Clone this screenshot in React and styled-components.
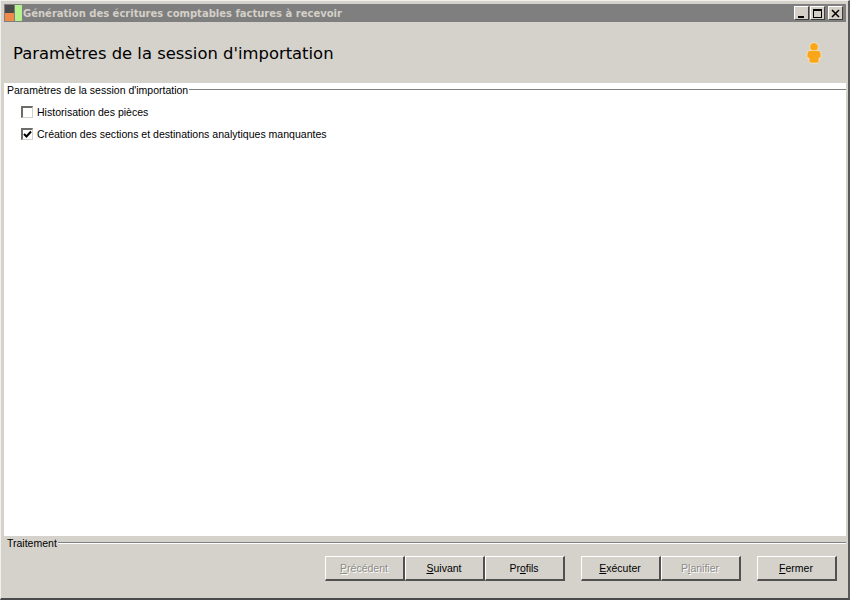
import React from 'react';
import styled, { createGlobalStyle } from 'styled-components';

const GlobalStyle = createGlobalStyle`
    html, body { margin: 0; padding: 0; background: #d5d2cc; }
    body { font-family: "Liberation Sans", Arial, sans-serif; }
`;

const Window = styled.div`
    box-sizing: border-box;
    width: 850px;
    height: 600px;
    display: flex;
    flex-direction: column;
    background: #d5d2cc;
    border-top: 1px solid #f2f0ec;
    border-left: 1px solid #f2f0ec;
    border-right: 2px solid #5a5a5a;
    border-bottom: 2px solid #4a4a4a;
    padding: 3px 2px 0 3px;
`;

const TitleBar = styled.div`
    height: 18px;
    flex: none;
    display: flex;
    align-items: center;
    background: #7f7f7f;
    color: #d4d0c8;
    font-family: "DejaVu Sans", Verdana, sans-serif;
    font-weight: bold;
    font-size: 10px;
    padding-right: 3px;
`;

const AppIcon = styled.svg`
    width: 18px;
    height: 18px;
    flex: none;
    margin-right: 1px;
`;

const TitleText = styled.span`
    flex: 1;
    white-space: nowrap;
`;

const WinButton = styled.div`
    box-sizing: border-box;
    width: 15px;
    height: 14px;
    margin-left: ${p => p.$gap || 1}px;
    background: #d4d0c8;
    border-top: 1px solid #fff;
    border-left: 1px solid #fff;
    border-right: 1px solid #404040;
    border-bottom: 1px solid #404040;
    display: flex;
    align-items: center;
    justify-content: center;
`;

const Header = styled.div`
    box-sizing: border-box;
    height: 61px;
    flex: none;
    display: flex;
    align-items: center;
    justify-content: space-between;
    padding: 1px 24px 0 9px;
`;

const Heading = styled.h1`
    margin: 0;
    font-family: "DejaVu Sans", Verdana, sans-serif;
    font-weight: normal;
    font-size: 16.4px;
    color: #000;
`;

const Content = styled.div`
    flex: 1;
    background: #fff;
    padding: 0 0 0 3px;
    font-size: 10.55px;
    color: #000;
`;

const Legend = styled.div`
    display: flex;
    align-items: center;
    height: 13px;
    font-size: 10.5px;
    color: #000;
`;

const LegendLine = styled.div`
    flex: 1;
    height: 2px;
    margin-left: 1px;
    background: linear-gradient(#808080 50%, #ffffff 50%);
`;

const OptionList = styled.div`
    display: flex;
    flex-direction: column;
    gap: 9px;
    padding: 9px 0 0 14px;
`;

const Option = styled.label`
    display: flex;
    align-items: center;
    height: 13px;
    gap: 4px;
`;

const CheckBox = styled.span`
    box-sizing: border-box;
    width: 12px;
    height: 12px;
    flex: none;
    display: flex;
    align-items: center;
    justify-content: center;
    background: #fff;
    border-top: 2px solid #6e6c68;
    border-left: 2px solid #6e6c68;
    border-right: 1px solid #d4d0c8;
    border-bottom: 1px solid #d4d0c8;
`;

const Footer = styled.div`
    height: 62px;
    flex: none;
    padding: 0 0 0 3px;
`;

const ButtonBar = styled.div`
    display: flex;
    justify-content: flex-end;
    padding: 7px 9px 0 0;
`;

const Button = styled.div`
    box-sizing: border-box;
    width: 80px;
    height: 25px;
    margin-left: ${p => p.$gap || 0}px;
    padding-right: 1px;
    display: flex;
    align-items: center;
    justify-content: center;
    font-size: 10.5px;
    background: #d5d2cc;
    color: ${p => (p.disabled ? '#8d8b86' : '#000')};
    text-shadow: ${p => (p.disabled ? '1px 1px 0 #fff' : 'none')};
    border-top: 1px solid #fff;
    border-left: 1px solid #fff;
    border-right: 2px solid #505050;
    border-bottom: 2px solid #505050;
    u { text-underline-offset: 1px; }
`;

const buttons = [
    { pre: '', key: 'P', post: 'récédent', disabled: true },
    { pre: '', key: 'S', post: 'uivant' },
    { pre: 'Pr', key: 'o', post: 'fils' },
    { pre: '', key: 'E', post: 'xécuter', gap: 16 },
    { pre: 'P', key: 'l', post: 'anifier', disabled: true },
    { pre: '', key: 'F', post: 'ermer', gap: 16 },
];

const App = () => (
    <React.Fragment>
        <GlobalStyle />
        <Window>
            <TitleBar>
                <AppIcon viewBox="0 0 18 18">
                    <rect x="1" y="1" width="9" height="8" fill="#4a4a4a" />
                    <rect x="1" y="9" width="9" height="8" fill="#f08a4b" />
                    <rect x="11" y="1" width="7" height="16" fill="#b4f08c" />
                </AppIcon>
                <TitleText>Génération des écritures comptables factures à recevoir</TitleText>
                <WinButton>
                    <svg width="9" height="9" viewBox="0 0 9 9"><rect x="1" y="7" width="6" height="2" fill="#000" /></svg>
                </WinButton>
                <WinButton>
                    <svg width="9" height="9" viewBox="0 0 9 9"><path d="M0 0h9v9H0z M1 2v6h7V2z" fill="#000" fillRule="evenodd" /></svg>
                </WinButton>
                <WinButton $gap={3}>
                    <svg width="9" height="9" viewBox="0 0 9 9"><path d="M1 1l7 7M8 1l-7 7" stroke="#000" strokeWidth="1.5" /></svg>
                </WinButton>
            </TitleBar>
            <Header>
                <Heading>Paramètres de la session d'importation</Heading>
                <svg width="16" height="22" viewBox="0 0 16 22">
                    <circle cx="8" cy="5" r="4.3" fill="#faa61a" stroke="#fff3d0" strokeWidth="0.6" />
                    <path d="M4 8.500h8c2 0 3 2 3 4.500v3h-2v3c0 1.200-1 2-2 2H5c-1 0-2-.8-2-2v-3H1v-3c0-2.500 1-4.500 3-4.500z" fill="#faa61a" stroke="#fff3d0" strokeWidth="0.6" />
                </svg>
            </Header>
            <Content>
                <Legend>
                    Paramètres de la session d'importation
                    <LegendLine />
                </Legend>
                <OptionList>
                    <Option>
                        <CheckBox />
                        Historisation des pièces
                    </Option>
                    <Option>
                        <CheckBox>
                            <svg width="9" height="9" viewBox="0 0 9 9">
                                <path d="M1 4l2.500 2.500L8 1.500" fill="none" stroke="#000" strokeWidth="2" />
                            </svg>
                        </CheckBox>
                        Création des sections et destinations analytiques manquantes
                    </Option>
                </OptionList>
            </Content>
            <Footer>
                <Legend>
                    Traitement
                    <LegendLine />
                </Legend>
                <ButtonBar>
                    {buttons.map(b => (
                        <Button key={b.key + b.post} disabled={b.disabled} $gap={b.gap}>
                            <span>{b.pre}<u>{b.key}</u>{b.post}</span>
                        </Button>
                    ))}
                </ButtonBar>
            </Footer>
        </Window>
    </React.Fragment>
);

export default App;
